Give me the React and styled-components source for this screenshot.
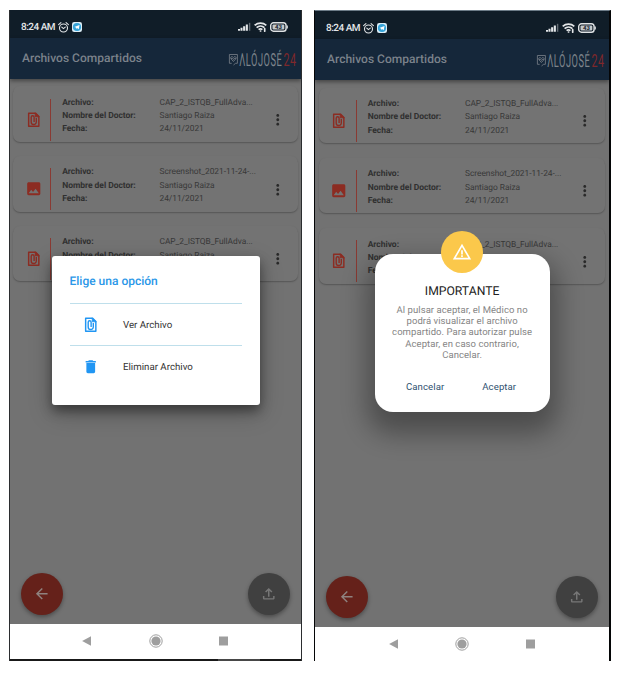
import React from "react";
import styled, { createGlobalStyle, css } from "styled-components";
import {
  MdImage,
  MdDelete,
  MdArrowBack,
  MdMoreVert,
  MdOutlineFileUpload,
  MdWarningAmber,
} from "react-icons/md";

const Global = createGlobalStyle`
  * { box-sizing: border-box; }
  body { margin: 0; background: #fff; font-family: Roboto, sans-serif; text-rendering: geometricPrecision; }
  svg { display: block; flex: none; }
`;

const Board = styled.main`
  display: flex;
  align-items: flex-start;
  width: 623px;
  height: 683px;
  padding: 10px 0 0 9px;
  overflow: hidden;
  gap: 12px;
`;

const Phone = styled.section`
  position: relative;
  display: flex;
  flex-direction: column;
  overflow: hidden;
  height: 651px;
  width: ${(p) => (p.$second ? 297 : 293)}px;
  border-style: solid;
  border-color: ${(p) => (p.$second ? "#050607" : "#2b2d2f")};
  border-width: ${(p) => (p.$second ? "1px 2px 0 1px" : "0 1px 0 1px")};
  ${(p) => p.$second && css`border-top-color: #6d7c88;`}
  background: #727272;
`;

const StatusBar = styled.div`
  display: flex;
  align-items: center;
  flex: none;
  height: 27.5px;
  padding: 7px 13px 0 11px;
  background: #101d28;
  color: #e3e6e8;
  font-size: 10px;
  font-weight: 500;
`;

const Clock = styled.span`
  letter-spacing: -0.5px;
  white-space: nowrap;
  margin-right: 3px;
`;

const StatusRight = styled.div`
  display: flex;
  align-items: center;
  gap: 3px;
  margin-left: auto;
`;

const AppBar = styled.header`
  position: relative;
  z-index: 1;
  display: flex;
  align-items: center;
  justify-content: space-between;
  flex: none;
  height: 41.5px;
  padding: 0 4px 0 12px;
  background: #15273a;
  box-shadow: 0 2px 4px rgba(0, 0, 0, 0.4);
`;

const BarTitle = styled.h1`
  margin: 0;
  font-size: 12px;
  font-weight: 500;
  letter-spacing: 0.02px;
  color: #7b828b;
  white-space: nowrap;
`;

const List = styled.div`
  display: flex;
  flex-direction: column;
  flex: 1;
  gap: ${(p) => (p.$second ? 14.4 : 14)}px;
  padding: ${(p) => (p.$second ? "7.5px 4px 0 3.5px" : "7px 3px 0")};
`;

const Card = styled.article`
  display: grid;
  grid-template-columns: 37px 12.2px 97.3px minmax(0, 1fr) 34px;
  flex: none;
  height: 55.8px;
  border-radius: 7px;
  background: #737373;
  box-shadow: 0 1px 1.5px rgba(0, 0, 0, 0.25);
`;

const CardIcon = styled.div`
  padding: 24.5px 0 0 11.7px;
  color: #8c2c22;
`;

const Rule = styled.i`
  width: 1px;
  height: 42px;
  margin-top: 12.5px;
  background: #8a3a33;
`;

const Lines = styled.div`
  padding-top: 10.7px;
  color: ${(p) => (p.$bold ? "#303030" : "#383838")};
  font-size: ${(p) => (p.$bold ? 8.5 : 8.4)}px;
  font-weight: ${(p) => (p.$bold ? 700 : 400)};
  letter-spacing: ${(p) => (p.$bold ? -0.04 : -0.03)}px;
  line-height: 13.3px;
  white-space: nowrap;
`;

const More = styled.div`
  padding: 24.8px 0 0 4.8px;
  color: #292929;
`;

const Actions = styled.div`
  display: flex;
  justify-content: space-between;
  flex: none;
  padding: 0 11px 9px;
`;

const Fab = styled.div`
  display: grid;
  place-items: center;
  width: 42px;
  height: 42px;
  border-radius: 50%;
  background: ${(p) => (p.$red ? "#65211a" : "#404040")};
  color: ${(p) => (p.$red ? "#8f827f" : "#777")};
  box-shadow: 0 2px 4px rgba(0, 0, 0, 0.35);
`;

const NavBar = styled.nav`
  display: flex;
  align-items: center;
  justify-content: center;
  gap: 54.5px;
  flex: none;
  height: 34.5px;
  background: #fff;
  color: #9e9e9e;
`;

const BottomStrip = styled.div`
  display: flex;
  flex: none;
  height: 2.5px;
  padding-left: 208px;
  background: #191919;
`;

const StripTab = styled.i`
  width: 42px;
  background: #484848;
`;

const OptionsDialog = styled.div`
  position: absolute;
  left: 41.5px;
  top: 246.3px;
  width: 208px;
  height: 149px;
  padding: 16.5px 18px;
  border-radius: 3px;
  background: #fff;
  box-shadow: 0 6px 12px rgba(0, 0, 0, 0.4), 0 8px 24px rgba(0, 0, 0, 0.22);
`;

const OptionsTitle = styled.h2`
  margin: 0 0 13px;
  font-size: 12px;
  font-weight: 500;
  line-height: 17px;
  color: #2a97e8;
  white-space: nowrap;
`;

const Option = styled.div`
  display: flex;
  align-items: center;
  height: 42.3px;
  padding-left: 12px;
  gap: 24px;
  border-top: 1px solid #bfdfeb;
  color: #2196f3;
`;

const OptionLabel = styled.span`
  padding-top: 1.5px;
  font-size: 9.7px;
  color: #333;
  white-space: nowrap;
`;

const AlertDialog = styled.div`
  position: absolute;
  left: 59.6px;
  top: 242.5px;
  width: 175px;
  height: 158px;
  display: flex;
  flex-direction: column;
  align-items: center;
  padding-top: 28px;
  border-radius: 18px;
  background: #fff;
  box-shadow: 0 14px 26px 8px rgba(0, 0, 0, 0.33);
`;

const AlertBadge = styled.div`
  position: absolute;
  left: 66.5px;
  top: -22.5px;
  display: grid;
  place-items: center;
  width: 42px;
  height: 42px;
  border-radius: 50%;
  background: #fbc84b;
  color: #fff;
`;

const AlertTitle = styled.h2`
  margin: 0 0 5.5px;
  font-size: 12.2px;
  font-weight: 400;
  line-height: 18px;
  color: #222;
`;

const AlertText = styled.p`
  margin: 0;
  text-align: center;
  font-size: 9.5px;
  line-height: 11.2px;
  letter-spacing: 0.06px;
  color: #858585;
  white-space: nowrap;
`;

const AlertButtons = styled.div`
  display: flex;
  gap: 38px;
  margin-top: 19.5px;
  padding-right: 2px;
`;

const TextButton = styled.button`
  padding: 0;
  border: 0;
  background: none;
  font: 400 9.6px/12px Roboto, sans-serif;
  letter-spacing: 0.08px;
  color: #2d506f;
`;

const FileClipIcon = () => (
  <svg width="17.5" height="17.5" viewBox="0 0 24 24" fill="none" stroke="currentColor">
    <path d="M14.6 3H5v18h14V7.4Z" strokeWidth="2" strokeLinejoin="round" />
    <path d="M14 2.5 19.5 8H14Z" fill="currentColor" />
    <path d="M15.5 9.5v5.6a3.5 3.5 0 0 1-7 0V8.6a2 2 0 0 1 4 0v6.6" strokeWidth="1.9" />
  </svg>
);

const AlarmIcon = () => (
  <svg width="11" height="11" viewBox="0 0 11 11" fill="none" stroke="currentColor" strokeWidth="1.1">
    <circle cx="5.5" cy="6" r="4" />
    <path d="M.6 2.6 2.9.7M10.4 2.6 8.1.7M3.8 5.2l1.6 1.4 1.9-1.5" strokeLinecap="round" />
  </svg>
);

const TelegramTile = styled.svg`
  margin-left: 3px;
`;

const TelegramIcon = () => (
  <TelegramTile width="10" height="10" viewBox="0 0 10 10">
    <rect width="10" height="10" rx="2.2" fill="#dceef7" />
    <circle cx="5" cy="5" r="4.1" fill="#34a3d8" />
    <path d="M2.3 5 7.5 2.9 6.7 7.3 5 6.1 4.1 6.9 4 5.6Z" fill="#fff" />
  </TelegramTile>
);

const SignalIcon = () => (
  <svg width="13" height="10" viewBox="0 0 13 10" fill="currentColor">
    <path d="M0 7h2v1.8H0zM2.5 5.8h2v3h-2zM5.1 4.2h2.1v4.6H5.1zM7.8 2.4h2.1v6.4H7.8z" />
    <path d="M10.9.8h1.4v8h-1.4z" opacity=".4" />
  </svg>
);

const WifiIcon = () => (
  <svg width="13" height="10" viewBox="0 0 13 10" fill="none" stroke="currentColor" strokeWidth="1.7">
    <path d="M.7 3.3c3.3-3 8.3-3 11.6 0M2.6 5.6c2.2-2 5.6-2 7.8 0M4.6 7.7c1.1-.9 2.7-.9 3.8 0" />
    <path d="M6.5 9h.1M10.7 6.7v2.5" strokeLinecap="round" />
  </svg>
);

const BatteryIcon = () => (
  <svg width="18" height="10" viewBox="0 0 18 10">
    <rect x=".7" y=".8" width="15.4" height="8.4" rx="2.8" fill="none" stroke="#dfe2e4" strokeWidth="1.4" />
    <rect x="2.5" y="2.5" width="11.8" height="5" rx="1" fill="#c4c8cb" />
    <path d="M17.2 3.4v3.2" stroke="#dfe2e4" strokeWidth="1.3" />
    <text x="8.5" y="7.1" textAnchor="middle" fontSize="6" fontWeight="700" fill="#17232c">43</text>
  </svg>
);

const Logo = () => (
  <svg width="69" height="30" viewBox="0 0 69 30" fontFamily="Roboto, sans-serif">
    <g fill="none" stroke="#7b828a" strokeWidth=".8">
      <path d="M3.7 20.3H1.4V11.5h8v8.8H7.6L5.5 22" />
      <path d="M5.4 18.5 3.2 16.1c-1.6-2 .9-3.5 2.2-1.6 1.3-1.9 3.8-.4 2.2 1.6ZM3 15.5h1.6l.8 1 .8-1h1.6" />
    </g>
    <text transform="translate(11.2 23) scale(.515 1)" fontSize="18" letterSpacing="1" fill="#7d848b">ΛLÓJOSÉ</text>
    <text transform="translate(55.4 23) scale(.6 1)" fontSize="18" letterSpacing="1" fill="#7f282b">24</text>
  </svg>
);

const NavIcons = () => (
  <>
    <svg width="14" height="14" viewBox="0 0 14 14" fill="currentColor"><path d="M11 2.2v9.6L2.1 7Z" /></svg>
    <svg width="14" height="14" viewBox="0 0 14 14">
      <circle cx="7" cy="7" r="6.2" fill="none" stroke="currentColor" />
      <circle cx="7" cy="7" r="4.6" fill="currentColor" />
    </svg>
    <svg width="14" height="14" viewBox="0 0 14 14" fill="currentColor"><path d="M2 2.5h9v9h-9z" /></svg>
  </>
);

const files = [
  { name: "CAP_2_ISTQB_FullAdva...", icon: <FileClipIcon /> },
  { name: "Screenshot_2021-11-24-...", icon: <MdImage size={17.5} /> },
  { name: "CAP_2_ISTQB_FullAdva...", icon: <FileClipIcon /> },
];

function Screen({ second, children }) {
  return (
    <Phone $second={second}>
      <StatusBar>
        <Clock>8:24 AM</Clock>
        <AlarmIcon />
        <TelegramIcon />
        <StatusRight>
          <SignalIcon />
          <WifiIcon />
          <BatteryIcon />
        </StatusRight>
      </StatusBar>
      <AppBar>
        <BarTitle>Archivos Compartidos</BarTitle>
        <Logo />
      </AppBar>
      <List $second={second}>
        {files.map(({ name, icon }, i) => (
          <Card key={i}>
            <CardIcon>{icon}</CardIcon>
            <Rule />
            <Lines $bold>
              <div>Archivo:</div>
              <div>Nombre del Doctor:</div>
              <div>Fecha:</div>
            </Lines>
            <Lines>
              <div>{name}</div>
              <div>Santiago Raiza</div>
              <div>24/11/2021</div>
            </Lines>
            <More><MdMoreVert size={17.5} /></More>
          </Card>
        ))}
      </List>
      <Actions>
        <Fab $red><MdArrowBack size={17.5} /></Fab>
        <Fab><MdOutlineFileUpload size={17.5} /></Fab>
      </Actions>
      <NavBar><NavIcons /></NavBar>
      {!second && <BottomStrip><StripTab /></BottomStrip>}
      {children}
    </Phone>
  );
}

export default function App() {
  return (
    <>
      <Global />
      <Board>
        <Screen>
          <OptionsDialog>
            <OptionsTitle>Elige una opción</OptionsTitle>
            <Option>
              <FileClipIcon />
              <OptionLabel>Ver Archivo</OptionLabel>
            </Option>
            <Option>
              <MdDelete size={17.5} />
              <OptionLabel>Eliminar Archivo</OptionLabel>
            </Option>
          </OptionsDialog>
        </Screen>
        <Screen second>
          <AlertDialog>
            <AlertBadge><MdWarningAmber size={20} /></AlertBadge>
            <AlertTitle>IMPORTANTE</AlertTitle>
            <AlertText>
              Al pulsar aceptar, el Médico no<br />
              podrá visualizar el archivo<br />
              compartido. Para autorizar pulse<br />
              Aceptar, en caso contrario,<br />
              Cancelar.
            </AlertText>
            <AlertButtons>
              <TextButton>Cancelar</TextButton>
              <TextButton>Aceptar</TextButton>
            </AlertButtons>
          </AlertDialog>
        </Screen>
      </Board>
    </>
  );
}
